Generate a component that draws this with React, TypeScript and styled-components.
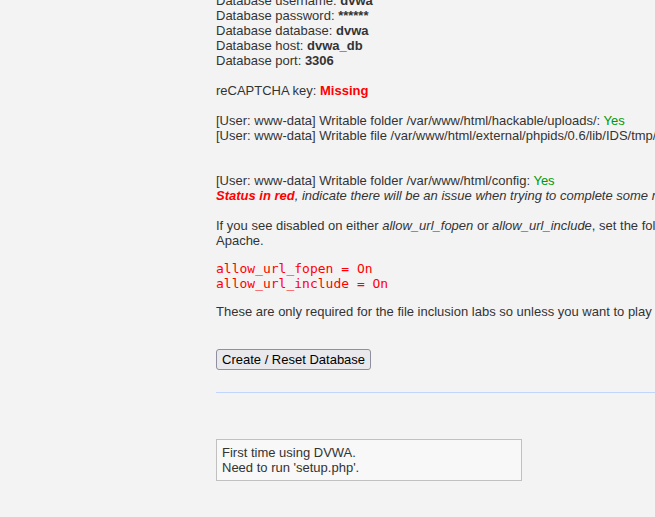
import styled, { createGlobalStyle } from 'styled-components';

const GlobalStyle = createGlobalStyle`
    html, body {
        margin: 0;
        padding: 0;
        background-color: #f3f3f3;
        overflow: hidden;
    }
    body {
        font-family: "Liberation Sans", Arial, sans-serif;
        font-size: 13px;
        line-height: 15px;
        color: #333;
    }
`;

const Page = styled.div`
    width: 655px;
    height: 517px;
    overflow: hidden;
`;

/* page is scrolled: first line is half cut */
const Body = styled.div`
    margin-top: -7px;
    padding-left: 216px;
    width: 680px;
`;

const Line = styled.div<{ $gapBefore?: number }>`
    white-space: nowrap;
    min-height: 15px;
    margin-top: ${(p) => (p.$gapBefore ?? 0) * 15}px;
`;

const Para = styled.div`
    margin-top: 15px;
    width: 675px;
`;

const Ok = styled.span`
    color: #009900;
`;

const Bad = styled.span`
    color: #ff0000;
    font-weight: bold;
`;

const BadNote = styled.em`
    color: #ff0000;
    font-weight: bold;
`;

const Code = styled.pre`
    margin: 13px 0;
    font-family: "DejaVu Sans Mono", monospace;
    font-size: 13px;
    line-height: 15px;
    color: #ff0000;
`;

const Form = styled.form`
    margin-top: 30px;
`;

const SubmitButton = styled.button`
    font-family: "Liberation Sans", Arial, sans-serif;
    font-size: 13px;
    color: #000;
    height: 21px;
    padding: 1px 5px;
    background-color: #e9e9ed;
    border: 1px solid #8f8f9d;
    border-radius: 3px;
`;

const Divider = styled.hr`
    margin: 22px 0 0 0;
    border: 0;
    border-top: 1px solid #c2d5ff;
    width: 700px;
`;

const Message = styled.div`
    box-sizing: border-box;
    margin-top: 46px;
    width: 306px;
    padding: 5px;
    background-color: #f7f8f7;
    border: 1px solid #c0c0c0;
`;

const App = () => {
    return (
        <Page>
            <GlobalStyle />
            <Body>
                <Line>Database username: <b>dvwa</b></Line>
                <Line>Database password: <b>******</b></Line>
                <Line>Database database: <b>dvwa</b></Line>
                <Line>Database host: <b>dvwa_db</b></Line>
                <Line>Database port: <b>3306</b></Line>
                <Line $gapBefore={1}>reCAPTCHA key: <Bad>Missing</Bad></Line>
                <Line $gapBefore={1}>
                    [User: www-data] Writable folder /var/www/html/hackable/uploads/: <Ok>Yes</Ok>
                </Line>
                <Line>
                    [User: www-data] Writable file /var/www/html/external/phpids/0.6/lib/IDS/tmp/phpids_log.txt: <Bad>No</Bad>
                </Line>
                <Line $gapBefore={2}>
                    [User: www-data] Writable folder /var/www/html/config: <Ok>Yes</Ok>
                </Line>
                <Line>
                    <BadNote>Status in red</BadNote>
                    <i>, indicate there will be an issue when trying to complete some modules.</i>
                </Line>
                <Para>
                    If you see disabled on either <i>allow_url_fopen</i> or <i>allow_url_include</i>, set the following in your php.ini file and restart Apache.
                </Para>
                <Code>
                    {'allow_url_fopen = On\nallow_url_include = On'}
                </Code>
                <Line>
                    These are only required for the file inclusion labs so unless you want to play with those, you can ignore them.
                </Line>
                <Form onSubmit={(e) => e.preventDefault()}>
                    <SubmitButton type="submit">Create / Reset Database</SubmitButton>
                </Form>
                <Divider />
                <Message>
                    First time using DVWA.
                    <br />
                    Need to run 'setup.php'.
                </Message>
            </Body>
        </Page>
    );
};

export default App;
